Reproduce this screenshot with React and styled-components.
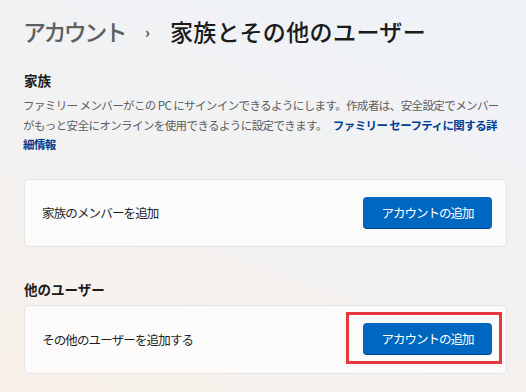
import React from "react";
import styled, { createGlobalStyle } from "styled-components";

const GlobalStyle = createGlobalStyle`
  html, body {
    margin: 0;
    padding: 0;
  }
  body {
    font-family: "Noto Sans CJK JP", "Noto Sans", sans-serif;
    color: #1b1b1b;
  }
`;

const Page = styled.div`
  width: 526px;
  height: 392px;
  box-sizing: border-box;
  padding: 13px 19px 0 24px;
  overflow: hidden;
  background: linear-gradient(200deg, #eef2f7 0%, #f2f2f3 45%, #f8f1e9 100%);
`;

const Title = styled.h1`
  margin: 0 0 0 -1px;
  height: 36px;
  display: flex;
  align-items: center;
  font-size: 23px;
  font-weight: 500;
  white-space: nowrap;
`;

const Crumb = styled.span`
  color: #5f5f5f;
  letter-spacing: -2.6px;
`;

const Chevron = styled.span`
  color: #4a4a4a;
  font-size: 15px;
  font-weight: 700;
  margin: 0 20px 0 20px;
`;

const Current = styled.span`
  color: #1b1b1b;
  letter-spacing: 0.4px;
`;

const SectionTitle = styled.h2`
  margin: ${(p) => p.$top}px 0 0 0;
  font-size: 13.5px;
  font-weight: 600;
  line-height: 20px;
`;

const Description = styled.p`
  margin: 6px 0 0 -1px;
  font-size: 11.5px;
  line-height: 19.5px;
  letter-spacing: -0.6px;
  color: #5d5d5d;
`;

const Link = styled.a`
  color: #003e92;
  font-weight: 700;
  text-decoration: none;
  margin-left: 6px;
`;

const Card = styled.div`
  margin-top: ${(p) => p.$top}px;
  height: ${(p) => p.$height}px;
  box-sizing: border-box;
  display: flex;
  align-items: center;
  justify-content: space-between;
  padding: 0 14px 0 17px;
  background: rgba(253, 253, 253, 0.85);
  border: 1px solid #e4e4e4;
  border-radius: 5px;
`;

const CardLabel = styled.span`
  font-size: 12.5px;
  letter-spacing: -0.85px;
  color: #1f1f1f;
`;

const ButtonWrap = styled.div`
  position: relative;
  display: flex;
`;

const Button = styled.button`
  width: 129px;
  height: 32px;
  box-sizing: border-box;
  border: none;
  border-bottom: 1px solid #003e92;
  border-radius: 4px;
  background: #0067c0;
  color: #ffffff;
  font-family: "Noto Sans CJK JP", "Noto Sans", sans-serif;
  font-size: 12.5px;
  letter-spacing: -1px;
  cursor: pointer;
`;

const Highlight = styled.span`
  position: absolute;
  left: -17px;
  right: -10px;
  top: -11px;
  bottom: -9px;
  border: 3px solid #e8383b;
  pointer-events: none;
`;

export default function App() {
  return (
    <>
      <GlobalStyle />
      <Page>
        <Title>
          <Crumb>アカウント</Crumb>
          <Chevron>›</Chevron>
          <Current>家族とその他のユーザー</Current>
        </Title>

        <SectionTitle $top={21}>家族</SectionTitle>
        <Description>
          ファミリー メンバーがこの PC にサインインできるようにします。作成者は、安全設定でメンバーがもっと安全にオンラインを使用できるように設定できます。
          <Link href="#">ファミリー セーフティに関する詳細情報</Link>
        </Description>

        <Card $top={24} $height={68}>
          <CardLabel>家族のメンバーを追加</CardLabel>
          <Button>アカウントの追加</Button>
        </Card>

        <SectionTitle $top={32}>他のユーザー</SectionTitle>
        <Card $top={6} $height={69}>
          <CardLabel>その他のユーザーを追加する</CardLabel>
          <ButtonWrap>
            <Button>アカウントの追加</Button>
            <Highlight />
          </ButtonWrap>
        </Card>
      </Page>
    </>
  );
}
